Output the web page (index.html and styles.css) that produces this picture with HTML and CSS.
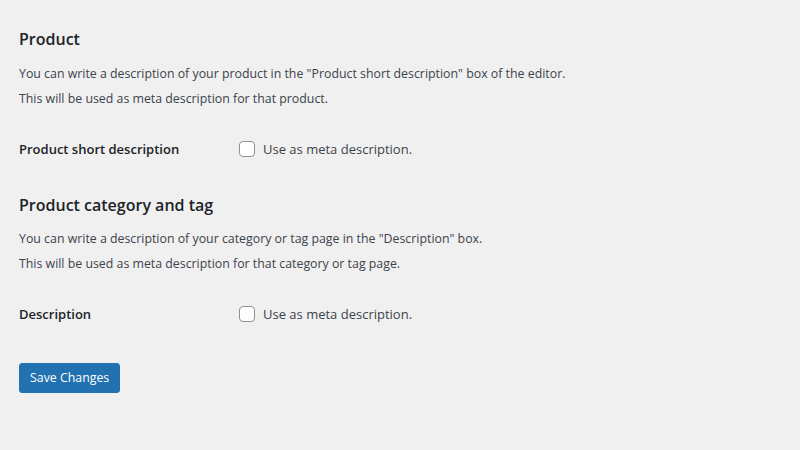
FILE: index.html
```html
<!DOCTYPE html>
<html lang="en">
<head>
<meta charset="utf-8">
<title>Settings</title>
<link rel="stylesheet" href="styles.css">
</head>
<body>
<div class="wrap">
  <section class="section">
    <h2 class="title">Product</h2>
    <div class="desc">
      <p>You can write a description of your product in the "Product short description" box of the editor.</p>
      <p>This will be used as meta description for that product.</p>
    </div>
    <div class="row">
      <div class="row-label">Product short description</div>
      <label class="field"><span class="box"></span>Use as meta description.</label>
    </div>
  </section>
  <section class="section">
    <h2 class="title">Product category and tag</h2>
    <div class="desc">
      <p>You can write a description of your category or tag page in the "Description" box.</p>
      <p>This will be used as meta description for that category or tag page.</p>
    </div>
    <div class="row">
      <div class="row-label">Description</div>
      <label class="field"><span class="box"></span>Use as meta description.</label>
    </div>
  </section>
  <div class="actions">
    <button class="btn-primary" type="button">Save Changes</button>
  </div>
</div>
</body>
</html>
```
FILE: styles.css
```css
html, body {
  margin: 0;
  padding: 0;
  background: #f0f0f1;
}
body {
  font-family: "Open Sans", "Noto Sans", sans-serif;
  font-size: 13px;
  color: #3c434a;
}
.wrap {
  padding: 27px 19px 0 19px;
  display: flex;
  flex-direction: column;
}
.section {
  display: flex;
  flex-direction: column;
}
.section + .section {
  margin-top: 36px;
}
.title {
  margin: 0;
  font-size: 16px;
  line-height: 24px;
  font-weight: 600;
  color: #1d2327;
}
.desc {
  margin-top: 9.5px;
}
.desc p {
  margin: 0;
  font-size: 12.35px;
  line-height: 25px;
}
.row {
  margin-top: 30px;
  display: flex;
  align-items: center;
  height: 16px;
}
.row-label {
  width: 220px;
  font-weight: 600;
  color: #1d2327;
  line-height: 16px;
}
.field {
  display: flex;
  align-items: center;
  gap: 8px;
  line-height: 16px;
}
.box {
  width: 16px;
  height: 16px;
  box-sizing: border-box;
  border: 1px solid #8c8f94;
  border-radius: 4px;
  background: #fff;
}
.actions {
  margin-top: 41px;
}
.btn-primary {
  height: 30px;
  padding: 0 10px;
  font-family: inherit;
  font-size: 12.35px;
  line-height: 28px;
  color: #fff;
  background: #2271b1;
  border: 1px solid #2271b1;
  border-radius: 3px;
}
```
